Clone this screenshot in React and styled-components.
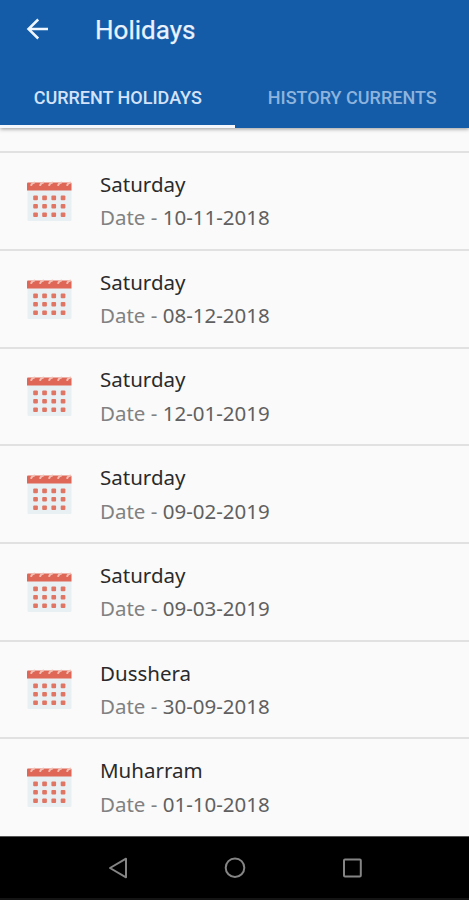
import React from "react";
import styled, { createGlobalStyle } from "styled-components";

const GlobalStyle = createGlobalStyle`
  * { box-sizing: border-box; }
  body { margin: 0; background: #fafafa; overflow: hidden; }
`;

const Screen = styled.main`
  display: flex;
  flex-direction: column;
  width: 469px;
  height: 900px;
  background: #fafafa;
  overflow: hidden;
`;

const Header = styled.header`
  flex: none;
  height: 127.5px;
  background: #145ca7;
  box-shadow: 0 1px 4px rgba(0, 0, 0, 0.4);
  font-family: Roboto, sans-serif;
`;

const Toolbar = styled.div`
  display: flex;
  align-items: center;
  height: 60px;
  padding-left: 26px;
`;

const BackButton = styled.button`
  display: flex;
  width: 23px;
  height: 22px;
  padding: 0;
  border: 0;
  background: none;
  margin-bottom: 2px;
`;

const Title = styled.h1`
  margin: 0 0 0 46px;
  color: #e9f2ff;
  font-size: 26px;
  line-height: 30px;
  font-weight: 400;
  -webkit-text-stroke: 0.25px #e9f2ff;
`;

const Tabs = styled.nav`
  display: flex;
  height: 67.5px;
`;

const Tab = styled.button`
  flex: 1;
  padding: 12px 0 0 1px;
  border: 0;
  border-bottom: 3px solid ${({ $active }) => ($active ? "#f4f8fc" : "transparent")};
  background: none;
  color: ${({ $active }) => ($active ? "#d5e3fa" : "#8eb4de")};
  font: 500 18px/22px Roboto, sans-serif;
  white-space: nowrap;
`;

const List = styled.ul`
  flex: none;
  height: 708.5px;
  margin: 0;
  padding: 23.8px 0 0;
  list-style: none;
`;

const Row = styled.li`
  display: flex;
  height: 97.7px;
  padding: 16.8px 0 0 27px;
  border-top: 2px solid #e1e1e1;
`;

const CalendarSvg = styled.svg`
  flex: none;
  width: 45px;
  height: 40px;
  margin: 10.8px 28px 0 0;
`;

const Details = styled.div`
  display: flex;
  flex-direction: column;
  gap: 5.4px;
  font: 20.5px/28px "Noto Sans", sans-serif;
  white-space: nowrap;
`;

const Name = styled.span`
  color: #2a2a2a;
`;

const DateLine = styled.span`
  color: #818181;
`;

const DateValue = styled.span`
  color: #606060;
`;

const SystemBar = styled.footer`
  flex: 1;
  display: flex;
  justify-content: center;
  align-items: center;
  gap: 93px;
  border-top: 1px solid #555;
  border-bottom: 2px solid #141414;
  background: #000;
`;

const NavIcon = styled.svg`
  width: 24px;
  height: 24px;
  fill: none;
  stroke: #858585;
  stroke-width: 2;
  stroke-linejoin: round;
`;

const holidays = [
  ["Saturday", "10-11-2018"],
  ["Saturday", "08-12-2018"],
  ["Saturday", "12-01-2019"],
  ["Saturday", "09-02-2019"],
  ["Saturday", "09-03-2019"],
  ["Dusshera", "30-09-2018"],
  ["Muharram", "01-10-2018"],
];

function CalendarIcon() {
  return (
    <CalendarSvg viewBox="0 0 45 40" aria-hidden="true">
      <rect x="0.5" y="3" width="44" height="37" rx="1" fill="#e9f0f4" />
      <path d="M0 2.5Q0 1.5 1 1.5H43.5Q44.5 1.5 44.5 2.5V9.5H0Z" fill="#df6757" />
      {[4, 13, 22, 31, 40].map((x) => (
        <path key={x} d={`M${x} 4.8Q${x + 0.5} 1.8 ${x + 4} 1.3`} fill="none" stroke="#f3c0b6" strokeWidth="1.8" />
      ))}
      {[16.8, 25.2, 33.7].map((y) =>
        [8.5, 17.5, 26.7, 36].map((x) => (
          <rect key={`${x}-${y}`} x={x - 2.3} y={y - 2.3} width="4.7" height="4.7" rx="1" fill="#e07563" />
        ))
      )}
    </CalendarSvg>
  );
}

export default function App() {
  return (
    <Screen>
      <GlobalStyle />
      <Header>
        <Toolbar>
          <BackButton aria-label="Back">
            <svg width="23" height="22" viewBox="0 0 23 22" fill="none" stroke="#eff6ff" strokeWidth="2.5">
              <path d="M12.2 1.5L2.5 11L12.2 20.5M2.5 11H22" />
            </svg>
          </BackButton>
          <Title>Holidays</Title>
        </Toolbar>
        <Tabs>
          <Tab $active>CURRENT HOLIDAYS</Tab>
          <Tab>HISTORY CURRENTS</Tab>
        </Tabs>
      </Header>
      <List>
        {holidays.map(([name, date]) => (
          <Row key={date}>
            <CalendarIcon />
            <Details>
              <Name>{name}</Name>
              <DateLine>
                Date - <DateValue>{date}</DateValue>
              </DateLine>
            </Details>
          </Row>
        ))}
      </List>
      <SystemBar>
        <NavIcon viewBox="0 0 24 24">
          <path d="M20 2.7V21.3L4 12Z" />
        </NavIcon>
        <NavIcon viewBox="0 0 24 24">
          <circle cx="12" cy="11.7" r="9.3" />
        </NavIcon>
        <NavIcon viewBox="0 0 24 24">
          <rect x="4" y="3.6" width="16.8" height="16.8" rx="1" />
        </NavIcon>
      </SystemBar>
    </Screen>
  );
}
